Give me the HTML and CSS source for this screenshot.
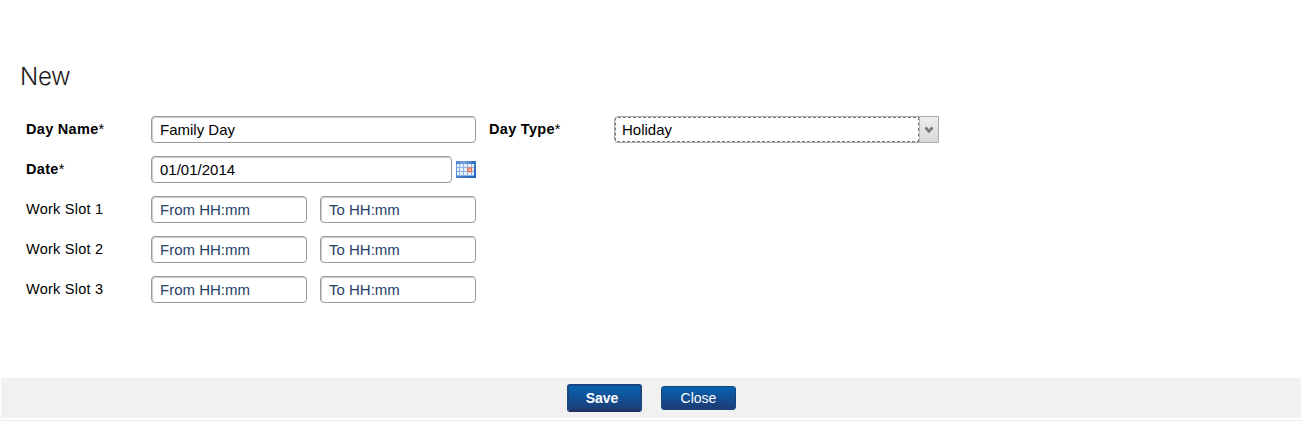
FILE: index.html
```
<!DOCTYPE html>
<html lang="en">
<head>
<meta charset="utf-8">
<title>New</title>
<link rel="stylesheet" href="styles.css">
</head>
<body>
<main class="page">
  <h1 class="title">New</h1>
  <form class="form">
    <div class="row">
      <label class="label required">Day Name<span class="star">*</span></label>
      <div class="fields"><input class="input" value="Family Day"></div>
      <label class="label required second">Day Type<span class="star">*</span></label>
      <div class="select">
        <span class="select-value">Holiday</span>
        <span class="select-button"><svg width="10" height="8" viewBox="0 0 10 8"><path d="M1.500 1.500L5 5.300L8.500 1.500" fill="none" stroke="#777" stroke-width="2.600"/></svg></span>
      </div>
    </div>
    <div class="row">
      <label class="label required">Date<span class="star">*</span></label>
      <div class="fields date"><input class="input" value="01/01/2014">
        <svg class="calendar" width="20" height="17" viewBox="0 0 20 17">
          <defs>
            <linearGradient id="cal" x1="0" y1="0" x2="1" y2="1"><stop offset="0" stop-color="#78a6e3"/><stop offset="1" stop-color="#1c60b5"/></linearGradient>
            <linearGradient id="head" x1="0" y1="0" x2="1" y2="0"><stop offset="0" stop-color="#4a83ca"/><stop offset="0.4" stop-color="#75a3dd"/><stop offset="1" stop-color="#2a68b8"/></linearGradient>
          </defs>
          <rect width="20" height="17" fill="url(#cal)"/>
          <path d="M0 0H20V3H0Z" fill="url(#head)"/>
          <path d="M1 3H18V15H1Z" fill="#8fb3e6"/>
          <path d="M1 3h2v3H1zM4 3h3v3H4zM8 3h3v3H8zM12 3h3v3h-3zM16 3h2v3h-2zM1 7h2v3H1zM4 7h3v3H4zM8 7h3v3H8zM16 7h2v3h-2zM1 11h2v3H1zM4 11h3v3H4zM8 11h3v3H8zM12 11h3v3h-3zM16 11h2v3h-2z" fill="#e6effc"/>
          <rect x="12" y="7" width="3.500" height="3.500" fill="#fbd5c5" stroke="#ee6843" stroke-width="1.300"/>
        </svg>
      </div>
    </div>
    <div class="row">
      <label class="label">Work Slot 1</label>
      <div class="fields slots"><input class="input" placeholder="From HH:mm"><input class="input" placeholder="To HH:mm"></div>
    </div>
    <div class="row">
      <label class="label">Work Slot 2</label>
      <div class="fields slots"><input class="input" placeholder="From HH:mm"><input class="input" placeholder="To HH:mm"></div>
    </div>
    <div class="row">
      <label class="label">Work Slot 3</label>
      <div class="fields slots"><input class="input" placeholder="From HH:mm"><input class="input" placeholder="To HH:mm"></div>
    </div>
  </form>
  <footer class="actions">
    <button class="button primary" type="button">Save</button>
    <button class="button" type="button">Close</button>
  </footer>
</main>
</body>
</html>
```
FILE: styles.css
```
* { box-sizing: border-box; }
body { margin: 0; background: #fff; color: #000; font-family: "Liberation Sans", Arial, sans-serif; font-size: 15px; overflow: hidden; }
.page { display: flex; flex-direction: column; height: 421px; padding: 62px 2px 0 1px; border-bottom: 1px solid #eee; }
.title { margin: 0 0 0 19px; font-family: Inter, "Liberation Sans", sans-serif; font-size: 24px; font-weight: 350; letter-spacing: -0.3px; line-height: 30px; color: #1a1a1a; }
.form { display: flex; flex-direction: column; gap: 13px; margin: 24px 0 0 25px; }
.row { display: grid; grid-template-columns: 125px 325px 138px 325px; height: 27px; }
.label { font-size: 14.500px; letter-spacing: 0.25px; line-height: 27px; white-space: nowrap; }
.required { letter-spacing: 0.3px; font-weight: 700; }
.star { font-weight: 400; }
.second { padding-left: 13px; }
.fields { display: grid; }
.slots { grid-template-columns: 1fr 1fr; gap: 13px; }
.date { grid-template-columns: 301px 20px; gap: 4px; align-items: center; }
.input { width: 100%; height: 27px; margin: 0; padding: 0 8px 1px; border: 1px solid #999; border-radius: 4px; background: #fff; box-shadow: inset 1px 1px 1px #ccc; outline: none; color: #000; font: 15px "Liberation Sans", Arial, sans-serif; }
.input::placeholder { color: #243f68; opacity: 1; }
.calendar { display: block; }
.select { display: flex; width: 325px; height: 27px; border: 1px solid #aaa; border-radius: 4px 0 0 4px; }
.select-value { flex: 1; padding-left: 6px; border: 1px dashed #777; line-height: 24px; border-radius: 3px 0 0 3px; }
.select-button { display: flex; width: 19px; align-items: center; justify-content: center; border-left: 1px solid #bbb; background: linear-gradient(#eee, #d8d8d8); }
.actions { display: flex; align-items: center; justify-content: center; gap: 19px; height: 40px; margin-top: 75px; padding-left: 1px; background: #f1f1f1; }
.button { width: 75px; height: 24px; margin: 0; padding: 0; border: 1px solid #164680; border-radius: 3px; background: linear-gradient(#0763b2, #1d3c75); color: #fff; font: 14px "Liberation Sans", Arial, sans-serif; }
.primary { height: 28px; padding-right: 5px; border: 2px solid #194581; border-bottom-color: #1a2f60; font-size: 14px; font-weight: 700; }
```
